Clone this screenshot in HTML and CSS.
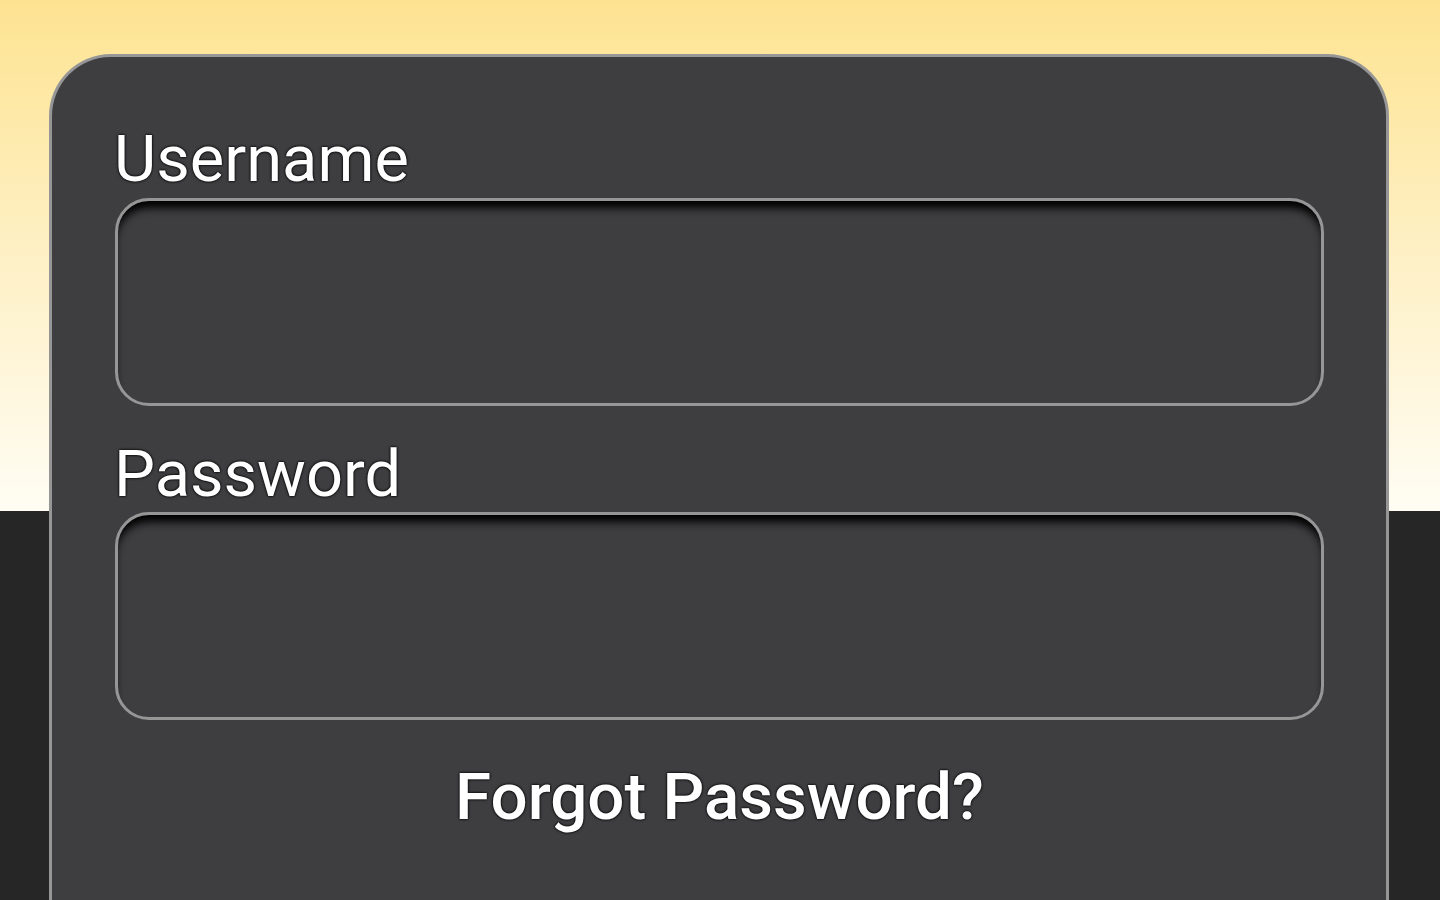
FILE: index.html
```html
<!DOCTYPE html>
<html>
<head>
<meta charset="utf-8">
<link rel="stylesheet" href="styles.css">
</head>
<body>
<div class="page">
  <div class="card">
    <label class="label" for="u">Username</label>
    <div class="field"><input id="u" class="input" type="text"></div>
    <label class="label label-pw" for="p">Password</label>
    <div class="field"><input id="p" class="input" type="password"></div>
    <div class="forgot">Forgot Password?</div>
  </div>
</div>
</body>
</html>
```
FILE: styles.css
```css
html, body {
  margin: 0;
  padding: 0;
  height: 100%;
  overflow: hidden;
}
body {
  font-family: Roboto, "Liberation Sans", sans-serif;
  background: #262626;
}
.page {
  height: 900px;
  background: linear-gradient(to bottom, #fde391 0px, #fef0c4 250px, #fffdf4 511px, #262626 511px, #262626 100%);
  padding-top: 54px;
  box-sizing: border-box;
  overflow: hidden;
}
.card {
  margin-left: 49px;
  width: 1340px;
  height: 846px;
  box-sizing: border-box;
  background: #3e3d40;
  border: 3px solid #969697;
  border-bottom: none;
  border-radius: 62px 62px 0 0;
  padding: 64px 62px 0 63px;
  display: flex;
  flex-direction: column;
}
.label {
  display: block;
  font-size: 65px;
  line-height: 76px;
  color: #ffffff;
  text-shadow: 0 0 2px #000, 0 0 3px #000;
  margin-bottom: 1px;
  margin-left: -1px;
}
.label-pw {
  margin-top: 30px;
  margin-bottom: 0;
}
.field {
  height: 208px;
  box-sizing: border-box;
  border: 3px solid #969696;
  border-radius: 34px;
  background: #3e3d40;
  box-shadow: inset 0 10px 9px -3px #000;
  overflow: hidden;
}
.input {
  width: 100%;
  height: 100%;
  border: none;
  outline: none;
  background: transparent;
  color: #fff;
  font: inherit;
  font-size: 48px;
  padding: 0 30px;
  box-sizing: border-box;
}
.forgot {
  margin-top: 39px;
  text-align: center;
  font-size: 65.5px;
  font-weight: 500;
  line-height: 76px;
  color: #fff;
  text-shadow: 0 0 2px #000, 0 0 3px #000;
}
```
